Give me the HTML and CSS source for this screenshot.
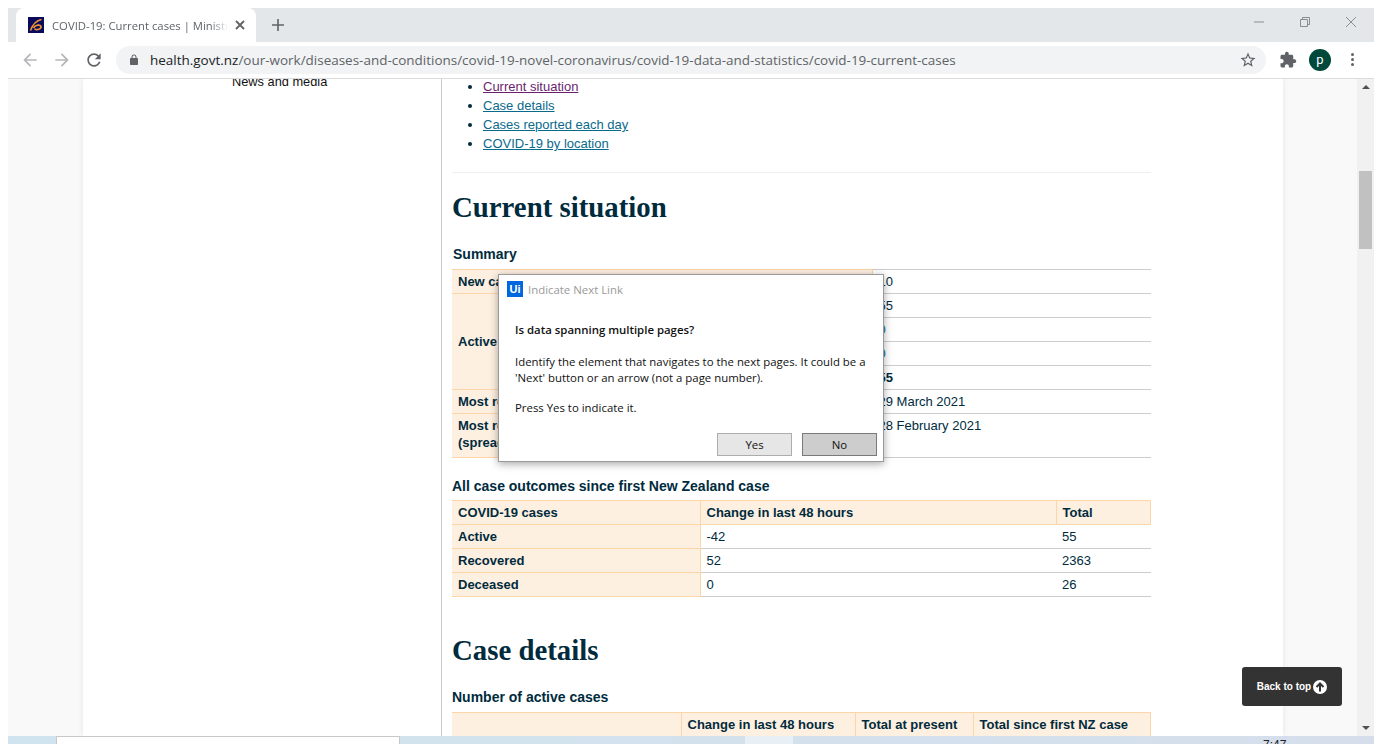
FILE: index.html
```html
<!DOCTYPE html>
<html lang="en">
<head>
    <meta charset="UTF-8">
    <title>COVID-19: Current cases | Ministry of Health NZ</title>
    <link rel="stylesheet" href="styles.css">
</head>
<body>
    <div class="window">
        <div class="tabstrip">
            <div class="tab">
                <svg class="favicon" width="16" height="16" viewBox="0 0 16 16"><rect width="16" height="16" fill="#0a0a5c"/><path d="M2.500 13.500C4.500 8 8 3.500 13.500 2.500M5.500 11C7 8 12 7 13 9.500 13.500 12 9 13.500 6.500 12" fill="none" stroke="#e8932e" stroke-width="1.700"/></svg>
                <span class="tab-title">COVID-19: Current cases | Ministry of Health NZ</span>
                <svg class="tab-close" width="10" height="10" viewBox="0 0 10 10"><path d="M1 1L9 9M9 1L1 9" stroke="#5f6368" stroke-width="1.800"/></svg>
            </div>
            <svg class="new-tab" width="12" height="12" viewBox="0 0 12 12"><path d="M6 0V12M0 6H12" stroke="#5f6368" stroke-width="1.600"/></svg>
            <div class="win-controls">
                <svg width="12" height="12" viewBox="0 0 12 12"><path d="M1 6H11" stroke="#8a8d91"/></svg>
                <svg width="12" height="12" viewBox="0 0 12 12"><path d="M1.500 3.500H8.500V10.500H1.500ZM3.500 3.500V1.500H10.500V8.500H8.500" fill="none" stroke="#8a8d91"/></svg>
                <svg width="12" height="12" viewBox="0 0 12 12"><path d="M1 1L11 11M11 1L1 11" stroke="#8a8d91"/></svg>
            </div>
        </div>

        <div class="toolbar">
            <svg class="nav-icon" width="20" height="20" viewBox="0 0 24 24"><path fill="#b4b6b9" d="M20 11H7.830l5.590-5.590L12 4l-8 8 8 8 1.410-1.410L7.830 13H20v-2z"/></svg>
            <svg class="nav-icon" width="20" height="20" viewBox="0 0 24 24"><path fill="#b4b6b9" d="M12 4l-1.410 1.410L16.170 11H4v2h12.170l-5.580 5.590L12 20l8-8z"/></svg>
            <svg class="nav-icon" width="20" height="20" viewBox="0 0 24 24"><path fill="#5f6368" d="M17.650 6.350C16.200 4.900 14.210 4 12 4c-4.420 0-7.990 3.580-7.990 8s3.570 8 7.990 8c3.730 0 6.840-2.550 7.730-6h-2.080c-.82 2.330-3.040 4-5.650 4-3.310 0-6-2.690-6-6s2.690-6 6-6c1.660 0 3.140.69 4.220 1.780L13 11h7V4l-2.350 2.350z"/></svg>
            <div class="omnibox">
                <svg class="lock" width="12" height="12" viewBox="0 0 24 24"><path fill="#5f6368" d="M18 8h-1V6c0-2.760-2.240-5-5-5S7 3.240 7 6v2H6c-1.100 0-2 .9-2 2v10c0 1.100.9 2 2 2h12c1.100 0 2-.9 2-2V10c0-1.100-.9-2-2-2zM9 6c0-1.660 1.340-3 3-3s3 1.340 3 3v2H9V6z"/></svg>
                <span class="url"><span class="url-host">health.govt.nz</span>/our-work/diseases-and-conditions/covid-19-novel-coronavirus/covid-19-data-and-statistics/covid-19-current-cases</span>
                <svg class="star" width="18" height="18" viewBox="0 0 24 24"><path fill="#5f6368" d="M22 9.240l-7.190-.62L12 2 9.190 8.630 2 9.240l5.460 4.730L5.820 21 12 17.270 18.180 21l-1.630-7.030L22 9.240zM12 15.400l-3.760 2.270 1-4.280-3.320-2.880 4.380-.38L12 6.100l1.710 4.040 4.380.38-3.320 2.880 1 4.280L12 15.400z"/></svg>
            </div>
            <svg class="puzzle" width="18" height="18" viewBox="0 0 24 24"><path fill="#5f6368" d="M20.500 11H19V7c0-1.100-.9-2-2-2h-4V3.500C13 2.120 11.880 1 10.500 1S8 2.120 8 3.500V5H4c-1.100 0-1.990.9-1.990 2v3.800H3.500c1.490 0 2.700 1.210 2.700 2.700s-1.210 2.700-2.700 2.700H2V20c0 1.100.9 2 2 2h3.800v-1.500c0-1.490 1.210-2.700 2.700-2.700 1.490 0 2.700 1.210 2.700 2.700V22H17c1.100 0 2-.9 2-2v-4h1.500c1.380 0 2.500-1.120 2.500-2.500S21.880 11 20.500 11z"/></svg>
            <div class="avatar">p</div>
            <div class="menu-dots"><i></i><i></i><i></i></div>
        </div>

        <div class="viewport">
            <div class="page">
                <div class="sheet">
                    <aside class="sidebar">News and media</aside>
                    <main class="content">
                        <ul class="toc">
                            <li><a class="visited" href="#current">Current situation</a></li>
                            <li><a href="#details">Case details</a></li>
                            <li><a href="#daily">Cases reported each day</a></li>
                            <li><a href="#location">COVID-19 by location</a></li>
                        </ul>
                        <hr class="rule">

                        <h2 id="current">Current situation</h2>
                        <h3 class="summary-title">Summary</h3>
                        <table class="data summary">
                            <tr><th colspan="2">New cases identified</th><td>10</td></tr>
                            <tr><th rowspan="4" class="sub-head">Active cases</th><th>Community</th><td>55</td></tr>
                            <tr><th>Border</th><td class="link-val">0</td></tr>
                            <tr><th>Under investigation</th><td class="link-val">0</td></tr>
                            <tr><th>Total</th><td class="strong-val">55</td></tr>
                            <tr><th colspan="2">Most recent case</th><td>29 March 2021</td></tr>
                            <tr class="tall"><th colspan="2">Most recent community case<br>(spread)</th><td>28 February 2021</td></tr>
                        </table>

                        <h3 class="outcomes-title">All case outcomes since first New Zealand case</h3>
                        <table class="data outcomes">
                            <tr class="head"><th>COVID-19 cases</th><th>Change in last 48 hours</th><th>Total</th></tr>
                            <tr><th>Active</th><td>-42</td><td>55</td></tr>
                            <tr><th>Recovered</th><td>52</td><td>2363</td></tr>
                            <tr><th>Deceased</th><td>0</td><td>26</td></tr>
                        </table>

                        <h2 id="details" class="details-title">Case details</h2>
                        <h3 class="active-title">Number of active cases</h3>
                        <table class="data active">
                            <tr class="head"><th></th><th>Change in last 48 hours</th><th>Total at present</th><th>Total since first NZ case</th></tr>
                        </table>
                    </main>
                </div>
            </div>
            <div class="scrollbar">
                <span class="arrow up"></span>
                <div class="thumb"></div>
                <span class="arrow down"></span>
            </div>

            <a class="back-top" href="#current">Back to top
                <svg width="14" height="14" viewBox="0 0 14 14"><circle cx="7" cy="7" r="7" fill="#fff"/><path d="M7 11.500V3.500M3.500 7L7 3.500 10.500 7" fill="none" stroke="#333" stroke-width="2"/></svg>
            </a>

            <div class="dialog">
                <div class="dialog-title">
                    <span class="ui-logo">Ui</span>
                    <span>Indicate Next Link</span>
                </div>
                <div class="dialog-body">
                    <p class="question">Is data spanning multiple pages?</p>
                    <p class="explain">Identify the element that navigates to the next pages. It could be a 'Next' button or an arrow (not a page number).</p>
                    <p>Press Yes to indicate it.</p>
                </div>
                <div class="dialog-buttons">
                    <button class="btn">Yes</button>
                    <button class="btn btn-focus">No</button>
                </div>
            </div>
        </div>
    </div>

    <div class="taskbar">
        <div class="task-window"></div>
        <div class="task-light"></div>
        <span class="task-clock">7:47</span>
    </div>
</body>
</html>
```

FILE: styles.css
```css
html, body {
    height: 100%;
}

body {
    display: flex;
    flex-direction: column;
    height: 744px;
    margin: 0;
    overflow: hidden;
    background: #fff;
    font-family: "Liberation Sans", Arial, sans-serif;
    color: #002b3d;
}

.window {
    display: flex;
    flex-direction: column;
    flex: 1;
    min-height: 0;
    margin: 8px 8px 0;
}

/* browser chrome */
.tabstrip {
    display: flex;
    align-items: center;
    height: 34px;
    padding-left: 8px;
    background: #e4e7ea;
}

.tab {
    display: flex;
    align-items: center;
    box-sizing: border-box;
    width: 240px;
    height: 34px;
    padding: 0 11px 0 12px;
    background: #fff;
    border-radius: 8px 8px 0 0;
}

.favicon {
    flex: none;
    margin-right: 8px;
}

.tab-title {
    flex: 1;
    overflow: hidden;
    white-space: nowrap;
    font-family: "Open Sans", sans-serif;
    font-size: 11.300px;
    color: #5f6368;
    -webkit-mask-image: linear-gradient(to right, #000 90%, transparent 100%);
    mask-image: linear-gradient(to right, #000 90%, transparent 100%);
}

.tab-close {
    flex: none;
    margin-left: 7px;
}

.new-tab {
    margin-left: 16px;
}

.win-controls {
    display: flex;
    gap: 34px;
    margin-left: auto;
    padding-right: 17px;
    margin-top: -6px;
}

.toolbar {
    display: flex;
    align-items: center;
    box-sizing: border-box;
    height: 37px;
    padding: 0 20px 1px 12px;
    background: #fff;
    border-bottom: 1px solid #dcdcdc;
}

.nav-icon {
    flex: none;
    margin-right: 12px;
}

.omnibox {
    display: flex;
    align-items: center;
    flex: 1;
    height: 28px;
    padding: 0 9px 0 12px;
    background: #f1f3f4;
    border-radius: 14px;
}

.lock {
    flex: none;
    margin-right: 10px;
}

.url {
    flex: 1;
    white-space: nowrap;
    overflow: hidden;
    font-family: "Open Sans", sans-serif;
    font-size: 13.480px;
    color: #5f6368;
}

.url-host {
    color: #202124;
}

.puzzle {
    flex: none;
    margin-left: 13px;
}

.avatar {
    flex: none;
    width: 22px;
    height: 22px;
    margin-left: 12px;
    border-radius: 50%;
    background: #00493b;
    color: #fff;
    font-family: "Roboto", sans-serif;
    font-size: 13px;
    line-height: 21px;
    text-align: center;
}

.menu-dots {
    display: flex;
    flex-direction: column;
    flex: none;
    gap: 2px;
    margin-left: 20px;
}

.menu-dots i {
    display: block;
    width: 3px;
    height: 3px;
    border-radius: 50%;
    background: #5f6368;
}

/* page area */
.viewport {
    position: relative;
    display: flex;
    flex: 1;
    min-height: 0;
}

.page {
    flex: 1;
    overflow: hidden;
    padding: 0 74px 0 75px;
    background: #f9f9f9;
}

.sheet {
    display: flex;
    height: 100%;
    background: #fff;
    box-shadow: 0 0 6px rgba(0, 0, 0, 0.08);
}

.sidebar {
    flex: none;
    width: 358px;
    box-sizing: border-box;
    margin-top: -4px;
    padding-left: 149px;
    font-size: 12.800px;
    line-height: 14px;
    color: #111;
}

.content {
    width: 710px;
    box-sizing: border-box;
    margin-top: -2px;
    padding-left: 10px;
    border-left: 1px solid #ccc;
}

.toc {
    margin: 0;
    padding: 0 0 0 31px;
    font-size: 13px;
    line-height: 19px;
}

.toc a {
    color: #0a6a8c;
}

.toc a.visited {
    color: #6b1f6f;
}

.rule {
    height: 0;
    margin: 19px 0 0;
    border: 0;
    border-top: 1px solid #eee;
}

h2 {
    margin: 18px 0 0;
    font-family: "Liberation Serif", serif;
    font-size: 28.800px;
    line-height: 32px;
    font-weight: bold;
    color: #002b3d;
}

h3 {
    margin: 0;
    font-size: 14px;
    line-height: 18px;
    font-weight: bold;
}

.summary-title {
    margin: 22px 0 6px 1px;
}

.outcomes-title {
    margin: 19px 0 5px;
}

.details-title {
    margin-top: 37px;
}

.active-title {
    margin: 22px 0 6px;
}

.data {
    width: 699px;
    border-collapse: collapse;
    table-layout: fixed;
    font-size: 13px;
    line-height: 17px;
}

.data th,
.data td {
    box-sizing: border-box;
    height: 24px;
    padding: 3px 6px;
    text-align: left;
    vertical-align: top;
    white-space: nowrap;
}

.data th {
    background: #fef0e1;
    border: 1px solid #fdd5a8;
    border-left: 0;
    font-weight: bold;
}

.data td {
    border: 1px solid #ccc;
    border-left: 0;
    border-right: 0;
}

.data .sub-head {
    vertical-align: middle;
}

.data .tall th,
.data .tall td {
    height: 44px;
}

.link-val {
    color: #0a6a8c;
}

.strong-val {
    font-weight: bold;
}

.summary tr > :last-child {
    width: 279px;
}

.summary tr:nth-child(2) > th:first-child {
    width: 210px;
}

.outcomes tr:first-child > :nth-child(1) {
    width: 248px;
}

.outcomes tr:first-child > :nth-child(2) {
    width: 356px;
}

.active tr:first-child > :nth-child(1) {
    width: 229px;
}

.active tr:first-child > :nth-child(2) {
    width: 174px;
}

.active tr:first-child > :nth-child(3) {
    width: 118px;
}

/* scrollbar */
.scrollbar {
    display: flex;
    flex-direction: column;
    flex: none;
    align-items: center;
    box-sizing: border-box;
    width: 17px;
    padding: 6px 0;
    background: #f1f1f1;
}

.arrow {
    width: 0;
    height: 0;
    border-left: 4px solid transparent;
    border-right: 4px solid transparent;
}

.arrow.up {
    border-bottom: 4px solid #505050;
}

.arrow.down {
    margin-top: auto;
    border-top: 4px solid #505050;
}

.thumb {
    width: 13px;
    height: 78px;
    margin-top: 82px;
    background: #c1c1c1;
}

/* overlays */
.back-top {
    position: absolute;
    right: 32px;
    bottom: 30px;
    display: flex;
    align-items: center;
    justify-content: center;
    gap: 2px;
    width: 100px;
    height: 39px;
    border-radius: 3px;
    background: #333;
    color: #fff;
    font-size: 10px;
    font-weight: bold;
    text-decoration: none;
}

.dialog {
    position: absolute;
    left: 490px;
    top: 195px;
    display: flex;
    flex-direction: column;
    box-sizing: border-box;
    width: 386px;
    height: 188px;
    background: #fff;
    border: 1px solid #9a9a9a;
    box-shadow: 0 2px 8px rgba(0, 0, 0, 0.35);
    font-family: "Open Sans", sans-serif;
    font-size: 11.400px;
    color: #111;
}

.dialog-title {
    display: flex;
    align-items: center;
    gap: 5px;
    height: 28px;
    padding: 0 8px;
    font-size: 11.400px;
    color: #9a9a9a;
}

.ui-logo {
    width: 16px;
    height: 16px;
    background: #0067df;
    color: #fff;
    font-family: "Liberation Sans", sans-serif;
    font-size: 11px;
    font-weight: bold;
    line-height: 16px;
    text-align: center;
}

.dialog-body {
    flex: 1;
    padding: 19px 8px 0 16px;
    line-height: 16px;
}

.dialog-body p {
    margin: 0;
}

.dialog-body .question {
    margin-bottom: 16px;
    font-weight: 600;
}

.dialog-body .explain {
    margin-bottom: 14px;
}

.dialog-buttons {
    display: flex;
    justify-content: flex-end;
    gap: 10px;
    padding: 0 6px 5px 0;
}

.btn {
    width: 75px;
    height: 23px;
    padding: 0;
    background: #e6e6e6;
    border: 1px solid #adadad;
    font-family: "Open Sans", sans-serif;
    font-size: 11.400px;
    color: #111;
}

.btn-focus {
    background: #cdcdcd;
    border-color: #7a7a7a;
}

/* desktop taskbar, mostly off screen */
.taskbar {
    display: flex;
    flex: none;
    height: 8px;
    margin: 0 8px;
    overflow: hidden;
    background: linear-gradient(to right, #cfe4ee, #d6deec);
}

.task-window {
    flex: none;
    width: 344px;
    height: 20px;
    box-sizing: border-box;
    margin-left: 48px;
    background: #fff;
    border: 1px solid #c8c8c8;
}

.task-light {
    flex: none;
    width: 48px;
    margin-left: 345px;
    background: #e8f0f6;
}

.task-clock {
    margin: 2px 0 0 470px;
    font-size: 12px;
    line-height: 14px;
    color: #222;
}
```
